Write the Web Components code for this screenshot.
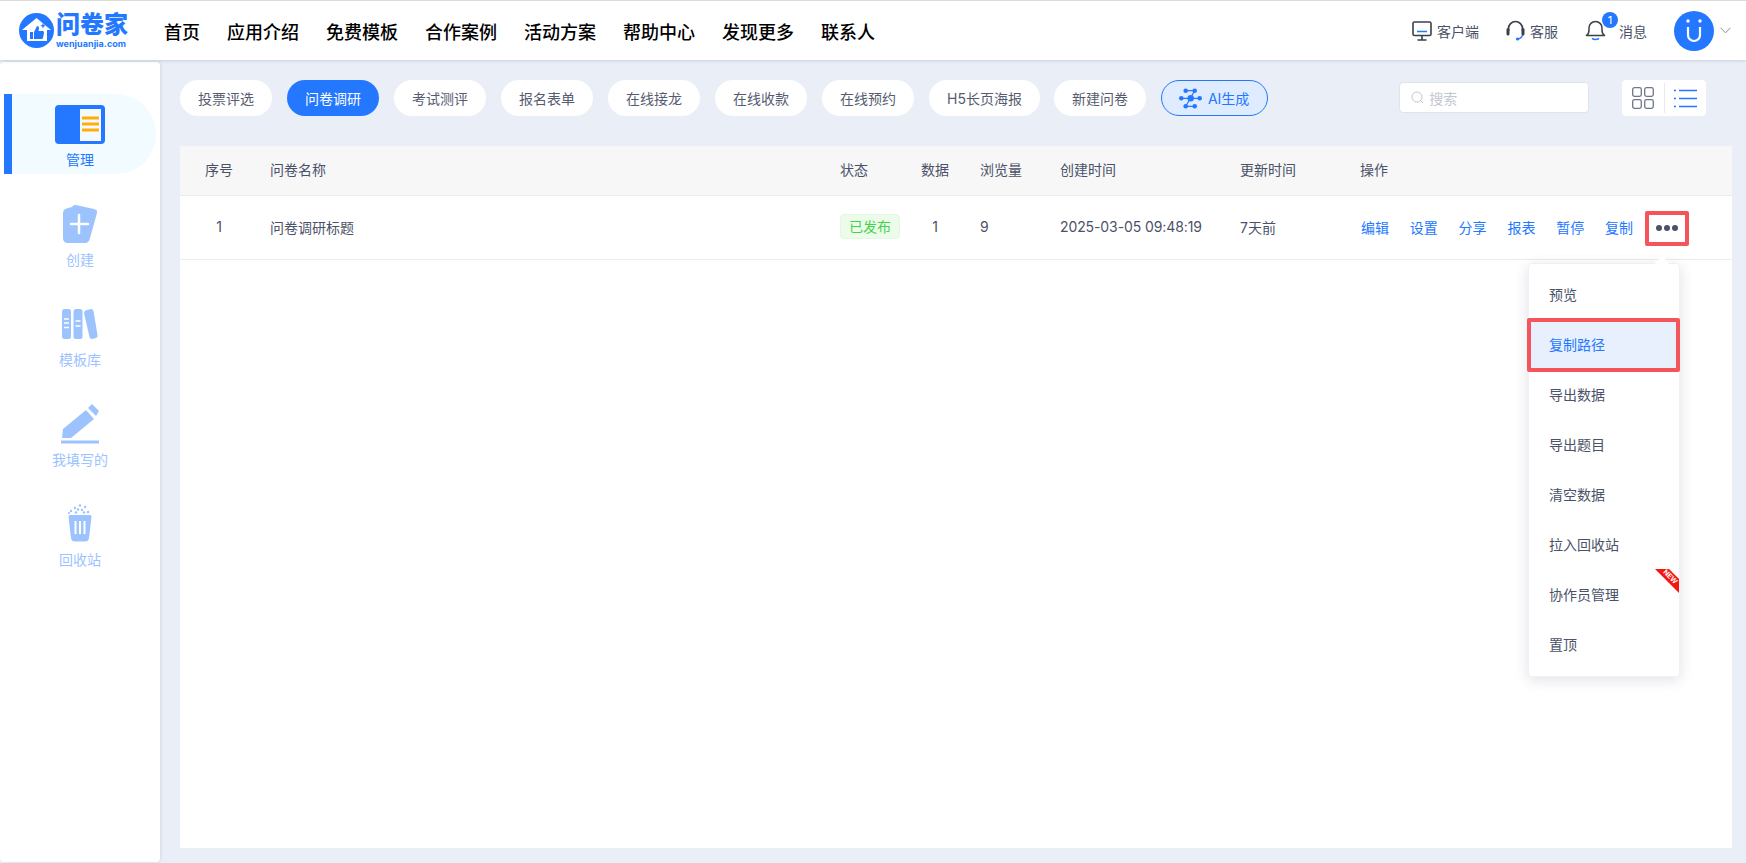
<!DOCTYPE html>
<html lang="zh">
<head>
<meta charset="utf-8">
<title>问卷家</title>
<style>
  html, body { margin: 0; height: 100%; }
  body {
    background: #e9eef7;
    font-family: Inter, "Noto Sans CJK SC", sans-serif;
    overflow: hidden;
  }
</style>
</head>
<body>
<wj-app>
  <wj-header slot="header"></wj-header>
  <wj-sidebar slot="side">
    <wj-side-item label="管理" active>
      <svg width="50" height="40" viewBox="0 0 50 40"><rect x="0" y="0" width="50" height="39" rx="4" fill="#2378ff"/><rect x="25" y="4" width="21" height="32" fill="#f4f8ff"/><rect x="27" y="11.500" width="17" height="3" fill="#ffad0a"/><rect x="27" y="17.500" width="17" height="3" fill="#ffad0a"/><rect x="27" y="23.500" width="17" height="3" fill="#ffad0a"/></svg>
    </wj-side-item>
    <wj-side-item label="创建">
      <svg style="margin-bottom:1px" width="36" height="40" viewBox="0 0 36 40"><path d="M6 4 L10 3 Q11 .5 14 1 L32 5 Q36 6 35 9 L28 34 Q27 39 23 39 L6 39 Q1 39 1 34 L1 9 Q1 5 6 4Z" fill="#9dc3ff"/><path d="M17 11v18M9 20h17" stroke="#fff" stroke-width="2.500" stroke-linecap="round"/></svg>
    </wj-side-item>
    <wj-side-item label="模板库">
      <svg style="margin-bottom:5px" width="36" height="32" viewBox="0 0 36 32"><rect x="0" y="1" width="9" height="30" rx="2.500" fill="#9dc3ff"/><rect x="11.500" y="1" width="9" height="30" rx="2.500" fill="#9dc3ff"/><path d="M23.500 2.500 L29 1 Q31 1 31.500 3 L35.500 27 Q36 29.500 34 30 L30 31 Q28 31.300 27.500 29 L22 5 Q22 3 23.500 2.500Z" fill="#9dc3ff"/><path d="M2 11h5M2 15h5M2 19.500h5M13.500 13h5M13.500 18h5" stroke="#fff" stroke-width="1.500"/></svg>
    </wj-side-item>
    <wj-side-item label="我填写的">
      <svg width="40" height="42" viewBox="0 0 40 42"><path d="M2 35 L3 26 L26 7 L34 16 L11 35Z" fill="#9dc3ff"/><path d="M28 5 L32 1 L39 8 L36 13Z" fill="#9dc3ff"/><rect x="1" y="37.500" width="38" height="3" fill="#9dc3ff"/></svg>
    </wj-side-item>
    <wj-side-item label="回收站">
      <svg style="margin-bottom:3px" width="26" height="38" viewBox="0 0 26 38"><path d="M1.500 12.500 Q1.500 11 3 11 H23 Q24.500 11 24.500 12.500 L22 34 Q21.500 37.500 18 37.500 H8 Q4.500 37.500 4 34Z" fill="#9dc3ff"/><path d="M8.500 17v13M13 17v13M17.500 17v13" stroke="#fff" stroke-width="2"/><g fill="#9dc3ff"><circle cx="13" cy="1.500" r="1.200"/><circle cx="8" cy="4" r="1.200"/><circle cx="18" cy="3" r="1.200"/><circle cx="4" cy="7" r="1.200"/><circle cx="11" cy="5.500" r="1.200"/><circle cx="15" cy="6" r="1.200"/><circle cx="21" cy="8" r="1.200"/><circle cx="9" cy="8.500" r="1.200"/><circle cx="17" cy="8.500" r="1.200"/><circle cx="2" cy="9" r="1"/></g></svg>
    </wj-side-item>
  </wj-sidebar>
  <wj-toolbar>
    <wj-pill>投票评选</wj-pill>
    <wj-pill active>问卷调研</wj-pill>
    <wj-pill>考试测评</wj-pill>
    <wj-pill>报名表单</wj-pill>
    <wj-pill>在线接龙</wj-pill>
    <wj-pill>在线收款</wj-pill>
    <wj-pill>在线预约</wj-pill>
    <wj-pill style="margin-right:-1px">H5长页海报</wj-pill>
    <wj-pill>新建问卷</wj-pill>
    <wj-pill ai>AI生成</wj-pill>
  </wj-toolbar>
  <wj-table>
    <wj-menu-item>预览</wj-menu-item>
    <wj-menu-item marked>复制路径</wj-menu-item>
    <wj-menu-item>导出数据</wj-menu-item>
    <wj-menu-item>导出题目</wj-menu-item>
    <wj-menu-item>清空数据</wj-menu-item>
    <wj-menu-item>拉入回收站</wj-menu-item>
    <wj-menu-item ribbon>协作员管理</wj-menu-item>
    <wj-menu-item>置顶</wj-menu-item>
  </wj-table>
</wj-app>

<script>
class WjApp extends HTMLElement {
  constructor() {
    super();
    this.attachShadow({ mode: "open" });
    this.shadowRoot.innerHTML = `
      <style>
        :host { display: flex; flex-direction: column; height: 863px; }
        .body { flex: 1; display: flex; min-height: 0; }
        .content { flex: 1; min-width: 0; display: flex; flex-direction: column; padding: 20px 14px 15px 20px; }
      </style>
      <slot name="header"></slot>
      <div class="body">
        <slot name="side"></slot>
        <div class="content"><slot></slot></div>
      </div>`;
  }
}

class WjHeader extends HTMLElement {
  constructor() {
    super();
    this.attachShadow({ mode: "open" });
    const nav = ['首页', '应用介绍', '免费模板', '合作案例', '活动方案', '帮助中心', '发现更多', '联系人']
    this.shadowRoot.innerHTML = `
      <style>
        :host {
          display: flex; align-items: center; box-sizing: border-box; height: 60px;
          background: #fff; border-top: 1px solid #dcdcdc; position: relative; z-index: 2;
          box-shadow: 0 1px 3px rgba(40,50,80,.16); color: #000;
        }
        .logo { display: flex; align-items: center; margin-left: 19px; width: 145px; flex: none; gap: 2px; }
        .words { display: flex; flex-direction: column; color: #2378ff; }
        .cn { font-size: 24px; font-weight: 900; line-height: 26px; white-space: nowrap; }
        .en { font-size: 9px; font-weight: 700; line-height: 10px; margin-top: 1px; letter-spacing: .04px; white-space: nowrap; }
        nav { display: flex; gap: 27px; font-size: 18px; font-weight: 500; }
        .right { margin-left: auto; display: flex; align-items: center; font-size: 14px; color: #4b5268; }
        .tool { display: flex; align-items: center; gap: 5px; position: relative; }
        .bubble {
          position: absolute; left: 17px; top: -8px; width: 16px; height: 16px; border-radius: 50%;
          background: #2378ff; color: #fff; font-size: 11px; line-height: 16px; text-align: center;
        }
        .avatar {
          width: 40px; height: 40px; border-radius: 50%; background: #2378ff; margin-left: 27px;
          display: flex; align-items: center; justify-content: center;
        }
        .caret { margin: 0 15px 0 6px; }
      </style>
      <div class="logo">
        <svg width="35" height="35" viewBox="0 0 35 35">
          <circle cx="17.500" cy="17.500" r="17.500" fill="#2378ff"/>
          <path d="M3 17 L17.500 5 L32 17 L28 17 L28 28 L8 28 L8 17Z" fill="#fff"/>
          <path d="M11 19h3v7h-3zM15 19 L18 13 Q20 13 20 15 L19.500 18 H24 Q25 18 25 20 L24 25 Q24 26 22 26 H15Z" fill="#2378ff"/>
          <path d="M24 10l.8 2 2 .8-2 .8-.8 2-.8-2-2-.8 2-.8z" fill="#2378ff"/>
        </svg>
        <div class="words"><div class="cn">问卷家</div><div class="en">wenjuanjia.com</div></div>
      </div>
      <nav>${nav.map(n => `<span>${n}</span>`).join('')}</nav>
      <div class="right">
        <div class="tool" style="margin-right:27px">
          <svg width="20" height="20" viewBox="0 0 20 20" fill="none"><rect x="1" y="1" width="18" height="13.500" rx="1.500" stroke="#3b3f4a" stroke-width="1.600"/><path d="M5 10.500h10" stroke="#2378ff" stroke-width="1.500"/><path d="M10 15v3.500M5.500 19h9" stroke="#3b3f4a" stroke-width="1.600"/></svg>
          <span>客户端</span>
        </div>
        <div class="tool" style="margin-right:27px">
          <svg width="19" height="21" viewBox="0 0 19 21" fill="none"><path d="M2.500 11 V8.500 A7 7 0 0 1 16.500 8.500 V11" stroke="#3b3f4a" stroke-width="1.700"/><rect x="0.500" y="8" width="3" height="7.500" rx="1.500" fill="#3b3f4a"/><rect x="15.500" y="8" width="3" height="7.500" rx="1.500" fill="#3b3f4a"/><path d="M16.500 15 Q16 18 12 19" stroke="#2378ff" stroke-width="1.500"/><circle cx="11.500" cy="19" r="1.600" fill="#2378ff"/></svg>
          <span>客服</span>
        </div>
        <div class="tool">
          <svg width="21" height="21" viewBox="0 0 21 21" fill="none"><path d="M1.500 15.500 Q4 14 4 10 V8 A6.500 6.500 0 0 1 17 8 V10 Q17 14 19.500 15.500Z" stroke="#3b3f4a" stroke-width="1.500" stroke-linejoin="round"/><path d="M7 18.500 Q10.500 20.500 14 18.500" stroke="#2378ff" stroke-width="1.500"/></svg>
          <span style="margin-left:8px">消息</span>
          <span class="bubble">1</span>
        </div>
        <div class="avatar">
          <svg width="22" height="26" viewBox="0 0 22 26" fill="none"><path d="M5 9 V17 A6 6 0 0 0 17 17 V9" stroke="#fff" stroke-width="2.200"/><circle cx="5" cy="3" r="1.700" fill="#fff"/><circle cx="17" cy="3" r="1.700" fill="#fff"/></svg>
        </div>
        <svg class="caret" width="11" height="7" viewBox="0 0 11 7" fill="none"><path d="M.5 .8 L5.500 5.800 L10.500 .8" stroke="#8a8f9c" stroke-width="1"/></svg>
      </div>`;
  }
}

class WjSidebar extends HTMLElement {
  constructor() {
    super();
    this.attachShadow({ mode: "open" });
    this.shadowRoot.innerHTML = `
      <style>
        :host {
          display: block; box-sizing: border-box; width: 160px; flex: none; margin-top: 2px; margin-bottom: 1px;
          background: #fff; border-radius: 4px; padding-top: 32px;
          box-shadow: 1px 0 3px rgba(40,50,80,.1);
        }
      </style>
      <slot></slot>`;
  }
}

class WjSideItem extends HTMLElement {
  constructor() {
    super();
    this.attachShadow({ mode: "open" });
    this.shadowRoot.innerHTML = `
      <style>
        :host {
          display: flex; flex-direction: column; align-items: center; justify-content: flex-end;
          box-sizing: border-box; height: 80px; width: 152px; margin: 0 0 20px 4px; padding: 0 8px 4px 0;
          font-size: 14px; line-height: 20px; color: #9dc3ff; border-left: 8px solid transparent; gap: 5px;
        }
        :host([active]) {
          background: #f2fbff; border-left-color: #2378ff; color: #2378ff;
          border-radius: 0 40px 40px 0;
        }
        ::slotted(svg) { display: block; }
      </style>
      <slot></slot>
      <span></span>`;
    this.shadowRoot.querySelector('span').textContent = this.getAttribute('label') ?? ''
  }
}

class WjToolbar extends HTMLElement {
  constructor() {
    super();
    this.attachShadow({ mode: "open" });
    this.shadowRoot.innerHTML = `
      <style>
        :host { display: flex; align-items: center; height: 36px; margin-bottom: 30px; flex: none; }
        .pills { display: flex; gap: 15px; }
        .search {
          box-sizing: border-box; width: 190px; height: 31px; margin: 0 0 1px 131px; background: #fff;
          border: 1px solid #dfe3ec; border-radius: 4px; display: flex; align-items: center; gap: 5px;
          padding-left: 11px; font-size: 14px; color: #c3c7d1;
        }
        .views {
          width: 84px; height: 36px; margin-left: 33px; background: #fff; border-radius: 4px;
          display: flex; align-items: center; position: relative;
        }
        .views > div { flex: 1; display: flex; justify-content: center; }
        .views > div + div { border-left: 1px solid #e8eaf0; height: 30px; align-items: center; }
      </style>
      <div class="pills"><slot></slot></div>
      <div class="search">
        <svg width="13" height="13" viewBox="0 0 13 13" fill="none"><circle cx="6" cy="6" r="5" stroke="#c3c7d1"/><path d="M9.500 9.500 L12 12" stroke="#c3c7d1"/></svg>
        <span>搜索</span>
      </div>
      <div class="views">
        <div><svg width="22" height="22" viewBox="0 0 22 22" fill="none" stroke="#70768c" stroke-width="1.300"><rect x=".7" y=".7" width="8.600" height="8.600" rx="1.800"/><rect x="12.700" y=".7" width="8.600" height="8.600" rx="1.800"/><rect x=".7" y="12.700" width="8.600" height="8.600" rx="1.800"/><rect x="12.700" y="12.700" width="8.600" height="8.600" rx="1.800"/></svg></div>
        <div><svg width="23" height="19" viewBox="0 0 23 19" fill="none" stroke="#2378ff" stroke-width="1.500"><path d="M5 1.500h18M5 9.500h18M5 17.500h18"/><path d="M0 1.500h2M0 9.500h2M0 17.500h2"/></svg></div>
      </div>`;
  }
}

class WjPill extends HTMLElement {
  constructor() {
    super();
    this.attachShadow({ mode: "open" });
    this.shadowRoot.innerHTML = `
      <style>
        :host {
          display: flex; align-items: center; gap: 4px; box-sizing: border-box; height: 36px; padding: 0 18px;
          border-radius: 18px; background: #fff; color: #565c70; font-size: 14px; white-space: nowrap;
        }
        :host([active]) { background: #2378ff; color: #fff; }
        :host([ai]) { background: #dfebff; border: 1px solid #2378ff; color: #2378ff; padding: 0 18px 0 17px; gap: 6px; }
        svg { display: none; }
        :host([ai]) svg { display: block; }
      </style>
      <svg width="23" height="21" viewBox="0 0 23 21" fill="none"><path d="M6.700 2.700h9M15.700 2.700 L6.700 18.300h9M2.300 10.300h18.400" stroke="#2378ff" stroke-width="1.200"/><g fill="#2378ff"><circle cx="6.700" cy="2.700" r="2.300"/><circle cx="15.700" cy="2.700" r="2.300"/><circle cx="2.300" cy="10.300" r="2.300"/><circle cx="11.700" cy="10.300" r="3.200"/><circle cx="20.700" cy="10.300" r="2.300"/><circle cx="6.700" cy="18.300" r="2.300"/><circle cx="15.700" cy="18.300" r="2.300"/></g></svg>
      <slot></slot>`;
  }
}

const COLS = '90px 570px 81px 59px 80px 180px 120px 1fr'

class WjTable extends HTMLElement {
  constructor() {
    super();
    this.attachShadow({ mode: "open" });
    const head = ['序号', '问卷名称', '状态', '数据', '浏览量', '创建时间', '更新时间', '操作']
    const ops = ['编辑', '设置', '分享', '报表', '暂停', '复制']
    this.shadowRoot.innerHTML = `
      <style>
        :host { display: block; flex: 1; background: #fff; position: relative; font-size: 14px; color: #4b5268; }
        .row { display: grid; grid-template-columns: ${COLS}; align-items: center; border-bottom: 1px solid #eaecf0; }
        .head { height: 50px; box-sizing: border-box; background: #f7f7f8; padding-bottom: 4px; }
        .data { height: 64px; box-sizing: border-box; padding-bottom: 2px; }
        .first { padding-left: 25px; }
        .num { width: 28px; text-align: center; }
        .time { letter-spacing: -.1px; }
        .badge {
          display: inline-block; box-sizing: border-box; width: 60px; height: 25px; line-height: 23px; text-align: center;
          background: #edfbea; border: 1px solid #e4f8e1; border-radius: 4px; color: #45d34f;
        }
        .ops { display: flex; align-items: center; color: #2378ff; position: relative; left: 1px; gap: 20.800px; white-space: nowrap; }
        .more {
          position: absolute; left: 284px; top: -6px; box-sizing: border-box; width: 44px; height: 35px;
          border: 4px solid #f5545a; border-radius: 2px; display: flex; align-items: center; justify-content: center; gap: 2px;
        }
        .more i { width: 6px; height: 6px; border-radius: 50%; background: #4b5268; }
        .menu {
          position: absolute; left: 1348px; top: 117px; width: 152px; box-sizing: border-box; padding: 5px 0 7px;
          background: #fff; border-radius: 4px; box-shadow: 0 3px 14px rgba(40,50,90,.14); border: 1px solid #f0f1f5;
        }
        .menu::before {
          content: ""; position: absolute; top: -6px; right: 12px; width: 10px; height: 10px; background: #fff;
          transform: rotate(45deg); border-radius: 1px 0 0 0;
        }
      </style>
      <div class="row head">
        ${head.map((h, i) => `<div class="${i === 0 ? 'first' : ''}">${h}</div>`).join('')}
      </div>
      <div class="row data">
        <div class="first"><div class="num">1</div></div>
        <div>问卷调研标题</div>
        <div><span class="badge">已发布</span></div>
        <div><div class="num">1</div></div>
        <div>9</div>
        <div class="time">2025-03-05 09:48:19</div>
        <div>7天前</div>
        <div class="ops">${ops.map(o => `<span>${o}</span>`).join('')}<div class="more"><i></i><i></i><i></i></div></div>
      </div>
      <div class="menu"><slot></slot></div>`;
  }
}

class WjMenuItem extends HTMLElement {
  constructor() {
    super();
    this.attachShadow({ mode: "open" });
    this.shadowRoot.innerHTML = `
      <style>
        :host {
          display: flex; align-items: center; height: 50px; padding-left: 20px; position: relative;
          font-size: 14px; color: #4b5268;
        }
        :host([marked]) { color: #2378ff; }
        .mark {
          display: none; position: absolute; inset: -1px -1px 0 -2px; height: 54px; box-sizing: border-box;
          background: #e8f0fd; border: 4px solid #f5545a; border-radius: 2px;
        }
        :host([marked]) .mark { display: block; }
        .text { position: relative; }
        .ribbon { display: none; position: absolute; right: 0; top: 0; width: 24px; height: 24px; }
        .ribbon::before {
          content: ""; position: absolute; inset: 0; background: #f7150f;
          clip-path: polygon(0 0, 14px 0, 24px 10px, 24px 24px);
        }
        :host([ribbon]) .ribbon { display: block; }
        .ribbon span {
          position: absolute; left: 14.500px; top: 8px; font-size: 7px; line-height: 8px; font-weight: 700; color: #fff;
          transform: translate(-50%, -50%) rotate(45deg); white-space: nowrap;
        }
      </style>
      <div class="mark"></div>
      <span class="text"><slot></slot></span>
      <div class="ribbon"><span>NEW</span></div>`;
  }
}

customElements.define('wj-app', WjApp);
customElements.define('wj-header', WjHeader);
customElements.define('wj-sidebar', WjSidebar);
customElements.define('wj-side-item', WjSideItem);
customElements.define('wj-toolbar', WjToolbar);
customElements.define('wj-pill', WjPill);
customElements.define('wj-table', WjTable);
customElements.define('wj-menu-item', WjMenuItem);
</script>
</body>
</html>
